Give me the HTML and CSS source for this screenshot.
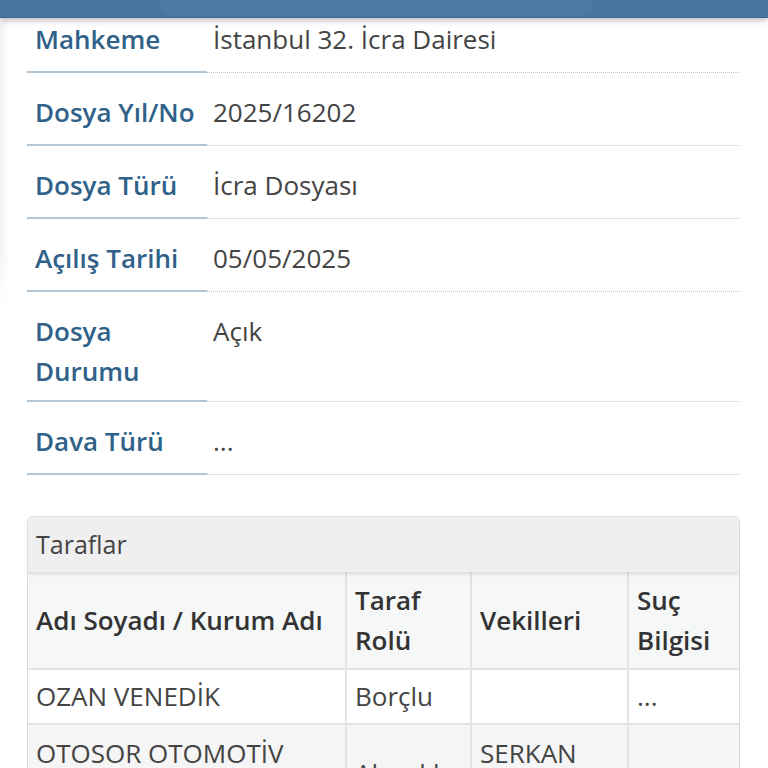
FILE: index.html
```html
<!DOCTYPE html>
<html lang="tr">
<head>
<meta charset="utf-8">
<link rel="stylesheet" href="styles.css">
</head>
<body>
<header class="topbar"><div class="topbar-inner"></div></header>
<div class="side-shade"></div>
<main class="page">
  <dl class="details">
    <div class="row"><dt>Mahkeme</dt><dd>İstanbul 32. İcra Dairesi</dd></div>
    <div class="row"><dt>Dosya Yıl/No</dt><dd>2025/16202</dd></div>
    <div class="row"><dt>Dosya Türü</dt><dd>İcra Dosyası</dd></div>
    <div class="row"><dt>Açılış Tarihi</dt><dd>05/05/2025</dd></div>
    <div class="row tall"><dt>Dosya Durumu</dt><dd>Açık</dd></div>
    <div class="row"><dt>Dava Türü</dt><dd>...</dd></div>
  </dl>

  <section class="panel">
    <div class="panel-head">Taraflar</div>
    <table class="parties">
      <colgroup>
        <col class="c1"><col class="c2"><col class="c3"><col class="c4">
      </colgroup>
      <thead>
        <tr><th>Adı Soyadı / Kurum Adı</th><th>Taraf Rolü</th><th>Vekilleri</th><th>Suç Bilgisi</th></tr>
      </thead>
      <tbody>
        <tr><td>OZAN VENEDİK</td><td>Borçlu</td><td></td><td>...</td></tr>
        <tr class="alt"><td>OTOSOR OTOMOTİV LİMİTED</td><td>Alacaklı</td><td>SERKAN KARA</td><td></td></tr>
      </tbody>
    </table>
  </section>
</main>
</body>
</html>
```

FILE: styles.css
```css
* { box-sizing: border-box; }
html, body { margin: 0; padding: 0; background: #fff; }
body {
  font-family: "Open Sans", "Noto Sans", sans-serif;
  color: #444;
  overflow: hidden;
}

.topbar {
  position: fixed;
  top: 0; left: 0; right: 0;
  height: 18px;
  background: #4874a0;
  border-bottom: 1px solid #3f6890;
  box-shadow: 0 2px 6px rgba(0,0,0,0.28);
  z-index: 5;
}
.topbar-inner {
  margin: 0 175px 0 160px;
  height: 16px;
  background: #4b79a4;
  border-radius: 0 0 10px 10px;
}

.side-shade {
  position: absolute;
  left: 0; top: 18px;
  width: 10px; height: 290px;
  background: linear-gradient(to right, rgba(0,0,0,0.05), rgba(0,0,0,0));
  -webkit-mask-image: linear-gradient(to bottom, #000 80%, transparent);
  mask-image: linear-gradient(to bottom, #000 80%, transparent);
  z-index: 4;
}

.page {
  padding: 0 28px 0 27px;
}

.details {
  margin: 0;
}
.row {
  display: flex;
  min-height: 73px;
}
.row.tall { min-height: 110px; }
.row dt, .row dd {
  margin: 0;
  padding: 19px 6px 8px 8px;
  font-size: 26px;
  line-height: 40px;
}
.row dt {
  flex: 0 0 180px;
  color: #2f6189;
  font-weight: 600;
  border-bottom: 2px solid #b3c6d6;
}
.row dd {
  flex: 1;
  padding-left: 6px;
  border-bottom: 1px dotted #b7c7d4;
  color: #444;
}

.panel {
  margin-top: 41px;
  border: 1px solid #dcdcdc;
  border-radius: 5px 5px 0 0;
  overflow: hidden;
}
.panel-head {
  height: 55px;
  background: #efefef;
  padding: 0 8px;
  font-size: 25px;
  line-height: 55px;
  color: #444;
  box-shadow: 0 2px 4px rgba(0,0,0,0.12);
  position: relative;
  z-index: 1;
}

.parties {
  width: 100%;
  table-layout: fixed;
  border-collapse: collapse;
}
.c1 { width: 318px; }
.c2 { width: 125px; }
.c3 { width: 157px; }
.c4 { width: auto; }

.parties th, .parties td {
  border: 2px solid #e3e3e3;
  padding: 8px 6px 8px 8px;
  font-size: 26px;
  line-height: 40px;
  text-align: left;
  vertical-align: middle;
}
.parties tr > :first-child { border-left: none; }
.parties tr > :last-child { border-right: none; }
.parties thead th {
  border-top: none;
  background: #f6f7f7;
  color: #333;
  font-weight: 600;
}
.parties td { color: #444; font-weight: 400; }
.parties tbody td { padding-top: 6px; padding-bottom: 7px; }
.parties .alt td { background: #f5f5f5; padding-top: 8px; }
```
